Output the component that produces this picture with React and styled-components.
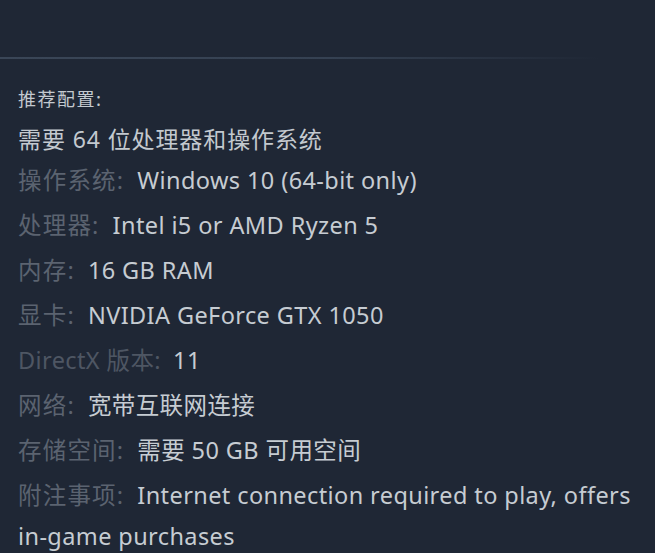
import React from "react";
import styled, { createGlobalStyle } from "styled-components";

const GlobalStyle = createGlobalStyle`
    html, body {
        margin: 0;
        padding: 0;
        background: #1f2735;
    }
    body {
        font-family: "Noto Sans", "Noto Sans CJK SC", sans-serif;
    }
`;

const Page = styled.div`
    width: 655px;
    height: 553px;
    overflow: hidden;
    background: #1f2735;
    padding-top: 57px;
    box-sizing: border-box;
`;

const Divider = styled.div`
    height: 2px;
    width: 600px;
    background: linear-gradient(
        to right,
        #3a4657 0%,
        #354152 55%,
        rgba(53, 65, 82, 0) 100%
    );
`;

const Body = styled.div`
    padding: 28px 24px 0 18px;
`;

const Title = styled.div`
    font-size: 18px;
    line-height: 22px;
    letter-spacing: 1.5px;
    color: #c3c9cf;
    font-family: "Noto Sans CJK SC", sans-serif;
`;

const Heading = styled.div`
    margin-top: 15px;
    font-size: 23px;
    line-height: 30px;
    letter-spacing: 0.9px;
    color: #c3c9cf;
`;

const List = styled.ul`
    list-style: none;
    margin: 6px 0 0;
    padding: 0;
`;

const Row = styled.li`
    font-size: 23.5px;
    line-height: 41px;
    letter-spacing: 0.4px;
    margin-bottom: 4px;
    color: #c6ccd2;
`;

const Label = styled.span`
    display: inline-block;
    color: ${(p) => (p.$dim ? "#4e5663" : "#5b6370")};
    letter-spacing: ${(p) => (p.$dim ? "0.4px" : "1.2px")};
    margin-right: ${(p) => (p.$dim ? "12px" : "13px")};
`;

const rows = [
    { label: "操作系统:", value: "Windows 10 (64-bit only)" },
    { label: "处理器:", value: "Intel i5 or AMD Ryzen 5" },
    { label: "内存:", value: "16 GB RAM" },
    { label: "显卡:", value: "NVIDIA GeForce GTX 1050" },
    { label: "DirectX 版本:", value: "11", dim: true },
    { label: "网络:", value: "宽带互联网连接" },
    { label: "存储空间:", value: "需要 50 GB 可用空间" },
    {
        label: "附注事项:",
        value: "Internet connection required to play, offers in-game purchases",
    },
];

export default function App() {
    return (
        <Page>
            <GlobalStyle />
            <Divider />
            <Body>
                <Title>推荐配置:</Title>
                <Heading>需要 64 位处理器和操作系统</Heading>
                <List>
                    {rows.map((r) => (
                        <Row key={r.label}>
                            <Label $dim={r.dim}>{r.label}</Label>
                            {r.value}
                        </Row>
                    ))}
                </List>
            </Body>
        </Page>
    );
}
